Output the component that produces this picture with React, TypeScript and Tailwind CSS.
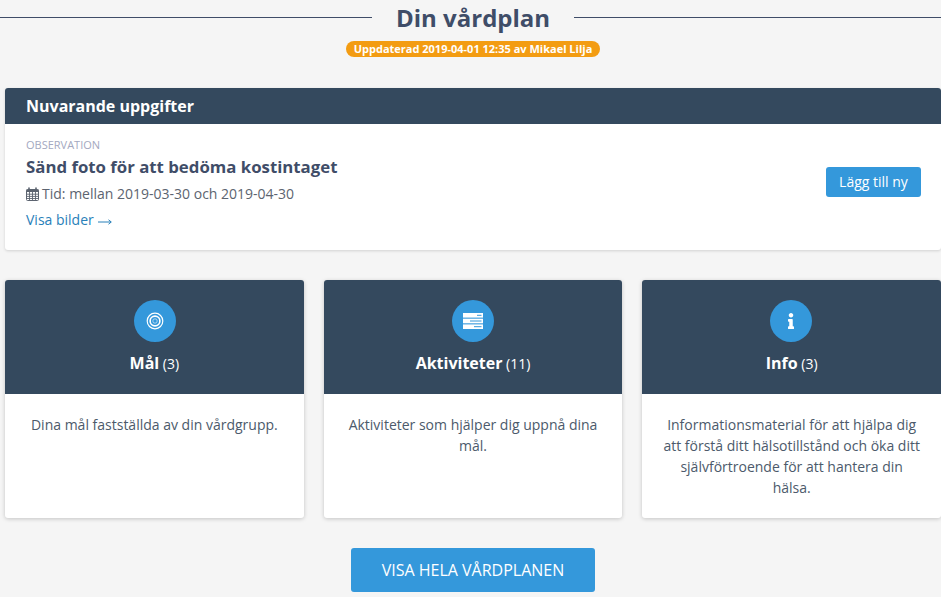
import React from "react";
import { FaInfo } from "react-icons/fa";

function CalendarIcon() {
  return (
    <svg width="13" height="14" viewBox="0 0 13 14" className="mr-[3px] shrink-0">
      <path d="M0.5 3.5a1 1 0 0 1 1-1h10a1 1 0 0 1 1 1v9a1 1 0 0 1-1 1h-10a1 1 0 0 1-1-1z" fill="none" stroke="#5c6470" />
      <rect x="0.5" y="2.5" width="12" height="2.5" fill="#5c6470" />
      <path d="M3 1v2.5M10 1v2.5" stroke="#5c6470" strokeWidth="1.6" strokeLinecap="round" />
      <path d="M0.5 7.2h12M0.5 9.4h12M0.5 11.500h12M3.500 5v8.500M6.500 5v8.500M9.500 5v8.500" stroke="#5c6470" strokeWidth="0.9" />
    </svg>
  );
}

function TargetIcon() {
  return (
    <svg width="18" height="18" viewBox="0 0 18 18" fill="none" stroke="#fff">
      <circle cx="9" cy="9" r="7.800" strokeWidth="1.200" />
      <circle cx="9" cy="9" r="4.900" strokeWidth="1.600" />
      <circle cx="9" cy="9" r="2.200" strokeWidth="0.800" strokeOpacity="0.7" />
    </svg>
  );
}

function ServerIcon() {
  return (
    <svg width="20" height="16" viewBox="0 0 20 16">
      <rect x="0" y="0" width="20" height="4.600" fill="#fff" />
      <rect x="0" y="5.700" width="20" height="4.600" fill="#fff" />
      <rect x="0" y="11.400" width="20" height="4.600" fill="#fff" />
      <path d="M14 2.300h4.500M7 8h11.500M11 13.700h7.500" stroke="#3498db" strokeWidth="1" />
    </svg>
  );
}

function ArrowIcon() {
  return (
    <svg width="14" height="8" viewBox="0 0 14 8" className="ml-[4px] mt-[3px]" fill="none" stroke="#2980b9">
      <path d="M0 4h13M10.500 1.800L13.300 4l-2.800 2.200" strokeWidth="1" />
    </svg>
  );
}

function Card({
  icon,
  title,
  count,
  text,
  circleClass,
}: {
  icon: React.ReactNode;
  title: string;
  count: string;
  text: string;
  circleClass?: string;
}) {
  return (
    <div className="flex-1 bg-white rounded-[3px] shadow-[0_1px_4px_rgba(0,0,0,0.2)] overflow-hidden h-[238px]">
      <div className="bg-[#34495e] h-[114px] flex flex-col items-center pt-5">
        <div className={`w-[42px] h-[42px] rounded-full bg-[#3498db] flex items-center justify-center ${circleClass ?? ""}`}>{icon}</div>
        <div className="mt-[8px] text-white leading-[26px]">
          <span className="text-base font-bold">{title}</span>
          <span className="text-sm"> {count}</span>
        </div>
      </div>
      <p className="px-5 pt-5 text-center text-sm leading-[21px] text-[#4c5a6b]">{text}</p>
    </div>
  );
}

export default function App() {
  return (
    <div className="w-[941px] h-[597px] overflow-hidden bg-[#f5f5f5] pl-[5px] font-['Open_Sans',sans-serif]">
      <div className="-ml-[5px] flex items-center h-[35px]">
        <div className="w-[372px] h-px bg-[#3f4d68]" />
        <h1 className="mx-6 text-2xl font-bold text-[#3f4d68] leading-[35px]">Din vårdplan</h1>
        <div className="flex-1 h-px bg-[#3f4d68]" />
      </div>
      <div className="flex justify-center mt-[6px]">
        <span className="h-4 px-2 rounded-full bg-[#f39c12] text-white text-[11px] font-bold leading-4">
          Uppdaterad 2019-04-01 12:35 av Mikael Lilja
        </span>
      </div>

      <section className="mt-[31px] bg-white rounded-[3px] shadow-[0_1px_3px_rgba(0,0,0,0.15)] overflow-hidden h-[162px]">
        <div className="bg-[#34495e] h-9 pl-[21px] text-white font-bold text-base leading-9">Nuvarande uppgifter</div>
        <div className="flex items-center justify-between pl-[21px] pr-5">
          <div>
            <div className="mt-[14px] text-[11px] leading-[14px] text-[#a3a8c0]">OBSERVATION</div>
            <div className="mt-[2px] text-[16.8px] font-bold text-[#3f4d68] leading-[26px]">Sänd foto för att bedöma kostintaget</div>
            <div className="mt-px flex items-center text-sm leading-[26px] text-[#5c6470]">
              <CalendarIcon />
              Tid: mellan 2019-03-30 och 2019-04-30
            </div>
            <div className="flex items-center text-sm leading-[26px] text-[#2980b9]">
              Visa bilder
              <ArrowIcon />
            </div>
          </div>
          <button className="h-[30px] w-[95px] rounded-[3px] bg-[#3498db] text-white text-sm mt-[6px]">Lägg till ny</button>
        </div>
      </section>

      <div className="mt-[30px] flex gap-5">
        <Card circleClass="ml-px" icon={<TargetIcon />} title="Mål" count="(3)" text="Dina mål fastställda av din vårdgrupp." />
        <Card icon={<ServerIcon />} title="Aktiviteter" count="(11)" text="Aktiviteter som hjälper dig uppnå dina mål." />
        <Card circleClass="mr-px" icon={<FaInfo className="text-white" size={16} />} title="Info" count="(3)" text="Informationsmaterial för att hjälpa dig att förstå ditt hälsotillstånd och öka ditt självförtroende för att hantera din hälsa." />
      </div>

      <div className="mt-[30px] flex justify-center">
        <button className="h-[44px] w-[244px] rounded-[3px] bg-[#3498db] text-white text-base">VISA HELA VÅRDPLANEN</button>
      </div>
    </div>
  );
}
